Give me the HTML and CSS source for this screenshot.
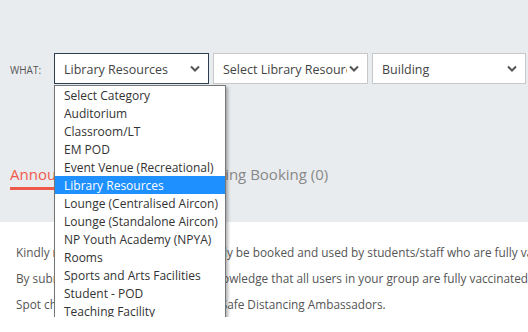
FILE: index.html
```html
<!DOCTYPE html>
<html lang="en">
<head>
  <meta charset="UTF-8">
  <title>Facility Booking</title>
  <link rel="stylesheet" href="styles.css">
</head>
<body>
  <section class="top">
    <div class="filters">
      <label class="filter-label">WHAT:</label>
      <div class="select-wrap">
        <div class="select focused">
          <span>Library Resources</span>
          <svg class="chev" width="10" height="7" viewBox="0 0 10 7"><path d="M1 1.5 L5 5.5 L9 1.5" fill="none" stroke="#555" stroke-width="2"/></svg>
        </div>
        <ul class="dropdown">
          <li>Select Category</li>
          <li>Auditorium</li>
          <li>Classroom/LT</li>
          <li>EM POD</li>
          <li>Event Venue (Recreational)</li>
          <li class="active">Library Resources</li>
          <li>Lounge (Centralised Aircon)</li>
          <li>Lounge (Standalone Aircon)</li>
          <li>NP Youth Academy (NPYA)</li>
          <li>Rooms</li>
          <li>Sports and Arts Facilities</li>
          <li>Student - POD</li>
          <li>Teaching Facility</li>
        </ul>
      </div>
      <div class="select">
        <span class="clip">Select Library Resources</span>
        <svg class="chev" width="10" height="7" viewBox="0 0 10 7"><path d="M1 1.5 L5 5.5 L9 1.5" fill="none" stroke="#555" stroke-width="2"/></svg>
      </div>
      <div class="select narrow">
        <span>Building</span>
        <svg class="chev" width="10" height="7" viewBox="0 0 10 7"><path d="M1 1.5 L5 5.5 L9 1.5" fill="none" stroke="#555" stroke-width="2"/></svg>
      </div>
    </div>
    <nav class="tabs">
      <a class="tab current">Announcements</a>
      <a class="tab">Upcoming Booking (0)</a>
    </nav>
  </section>
  <main class="notes">
    <p>Kindly note that these facilities can only be booked and used by students/staff who are fully vaccinated.</p>
    <p>By submitting your booking, you acknowledge that all users in your group are fully vaccinated.</p>
    <p>Spot checks will be conducted by the Safe Distancing Ambassadors.</p>
  </main>
</body>
</html>
```

FILE: styles.css
```css
* {
  margin: 0;
  padding: 0;
  box-sizing: border-box;
}

html, body {
  overflow: hidden;
}

body {
  font-family: 'Open Sans', sans-serif;
  background: #fff;
  color: #555;
}

.top {
  background: #e9ecef;
  height: 222px;
  padding: 53px 0 0 10px;
}

.filters {
  display: flex;
  align-items: center;
  gap: 4px;
}

.filter-label {
  width: 40px;
  font-size: 10px;
  color: #555;
  padding-top: 2px;
}

.select-wrap {
  position: relative;
}

.select {
  width: 155px;
  height: 31px;
  background: #fff;
  border: 1px solid #c8c8c8;
  display: flex;
  align-items: center;
  justify-content: space-between;
  padding: 2px 8px 0 9px;
  font-size: 12.5px;
  color: #444;
  white-space: nowrap;
}

.select.narrow {
  width: 154px;
}

.select.focused {
  border-color: #2c3e50;
}

.select .clip {
  overflow: hidden;
  width: 124px;
}

.chev {
  flex-shrink: 0;
  margin-top: -2px;
}

.dropdown {
  position: absolute;
  top: 32px;
  left: 0;
  width: 172px;
  list-style: none;
  background: #fff;
  border: 1px solid #767676;
  box-shadow: 2px 2px 3px rgba(0, 0, 0, 0.3);
  z-index: 5;
}

.dropdown li {
  height: 18px;
  line-height: 19px;
  padding-left: 9px;
  font-size: 12px;
  color: #333;
  white-space: nowrap;
}

.dropdown li.active {
  background: #1e90ff;
  color: #fff;
}

.tabs {
  display: flex;
  gap: 50px;
  margin-top: 80px;
}

.tab {
  font-size: 15px;
  color: #888;
  padding-bottom: 3px;
  border-bottom: 3px solid transparent;
}

.tab.current {
  color: #f05a4b;
  border-bottom-color: #f05a4b;
}

.notes {
  padding: 17px 16px 0;
  overflow: hidden;
}

.notes p {
  font-size: 11.8px;
  line-height: 26px;
  white-space: nowrap;
}
```
